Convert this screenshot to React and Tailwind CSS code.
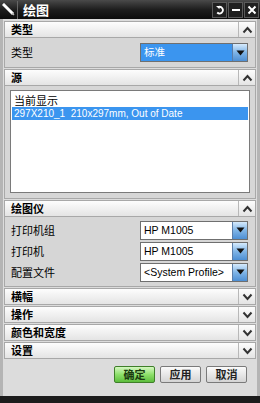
import React from "react";

const F = { fontFamily: '"Noto Sans CJK SC", "Liberation Sans", sans-serif' };
const L = { fontFamily: '"Liberation Sans", "Noto Sans CJK SC", sans-serif' };

function Chevron({ up }) {
  return (
    <svg width="11" height="8" viewBox="0 0 11 8">
      {up ? (
        <path d="M1.5 6.5 L5.5 2 L9.5 6.5" fill="none" stroke="#333" strokeWidth="2" />
      ) : (
        <path d="M1.5 1.5 L5.5 6 L9.5 1.5" fill="none" stroke="#333" strokeWidth="2" />
      )}
    </svg>
  );
}

function Header({ title, up }) {
  return (
    <div className="flex h-[17px] border border-[#a8a8a8] bg-gradient-to-b from-[#fdfdfd] to-[#e4e4e4]">
      <div className="flex-1 flex items-center pl-[6px] text-[11px] font-bold text-black leading-none">{title}</div>
      <div className="w-[17px] flex items-center justify-center border-l border-[#b8b8b8]">
        <Chevron up={up} />
      </div>
    </div>
  );
}

function DropBtn() {
  return (
    <div className="w-[15px] h-full flex items-center justify-center bg-gradient-to-b from-[#d6ebfd] via-[#7fb4e6] to-[#4d8fd4] border-l border-[#5a7da8]">
      <svg width="9" height="6" viewBox="0 0 9 6">
        <path d="M0.5 0.5 H8.5 L4.5 5.5 Z" fill="#111" />
      </svg>
    </div>
  );
}

function Select({ text, active }) {
  return (
    <div className={`flex w-[108px] h-[19px] border border-[#6f6f6f] ${active ? "bg-[#3b95ef]" : "bg-white"}`}>
      <div
        style={L}
        className={`flex-1 flex items-center pl-[3px] text-[10.5px] leading-none ${active ? "text-white" : "text-black"}`}
      >
        {text}
      </div>
      <DropBtn />
    </div>
  );
}

function Row({ label, children }) {
  return (
    <div className="flex items-center justify-between h-[20px]">
      <div className="pl-[6px] text-[11px] text-black leading-none">{label}</div>
      {children}
    </div>
  );
}

function Btn({ label, green }) {
  return (
    <div
      className={`w-[41px] h-[17px] flex items-center justify-center text-[11px] font-bold rounded-[2px] border ${
        green
          ? "border-[#3f7f2a] bg-gradient-to-b from-[#d4f7c0] via-[#8de06a] to-[#5cbd3c] text-[#1a3a10]"
          : "border-[#7a7a7a] bg-gradient-to-b from-[#fbfbfb] to-[#d4d4d4] text-[#222]"
      }`}
    >
      {label}
    </div>
  );
}

export default function App() {
  return (
    <div style={F} className="w-[260px] h-[403px] flex flex-col bg-[#1c1c1c] overflow-hidden">
      {/* title bar */}
      <div className="h-[19px] flex items-center bg-gradient-to-b from-[#4a4a4a] via-[#1e1e1e] to-[#0c0c0c] shrink-0">
        <div className="w-[18px] h-[18px] flex items-center justify-center border-r border-[#666]">
          <svg width="13" height="13" viewBox="0 0 13 13">
            <path d="M2 2 L10 10" stroke="#fff" strokeWidth="3" strokeLinecap="square" />
            <path d="M10 10 L12 12" stroke="#bbb" strokeWidth="1.5" />
          </svg>
        </div>
        <div className="pl-[5px] text-[13px] font-bold text-white leading-none flex-1">绘图</div>
        <div className="flex items-center gap-[1px] pr-[1px]">
          <div className="w-[15px] h-[16px] flex items-center justify-center border border-[#5a5a5a] bg-[#202020]">
            <svg width="10" height="10" viewBox="0 0 10 10">
              <path d="M3 2.2 A3.3 3.3 0 1 1 2.2 7.5" fill="none" stroke="#fff" strokeWidth="1.8" />
              <path d="M1 1 L4.5 1 L4.5 4.2 Z" fill="#fff" />
            </svg>
          </div>
          <div className="w-[15px] h-[16px] flex items-center justify-center border border-[#5a5a5a] bg-[#202020]">
            <div className="w-[8px] h-[2px] bg-white" />
          </div>
          <div className="w-[15px] h-[16px] flex items-center justify-center border border-[#5a5a5a] bg-[#202020]">
            <svg width="10" height="10" viewBox="0 0 10 10">
              <path d="M1.5 1.5 L8.5 8.5 M8.5 1.5 L1.5 8.5" stroke="#fff" strokeWidth="2" />
            </svg>
          </div>
        </div>
      </div>

      {/* body */}
      <div className="flex-1 flex flex-col bg-[#dcdcdc] border-x-[3px] border-[#b4b4b4] px-[1px] pt-[2px]">
        {/* 类型 */}
        <Header title="类型" up />
        <div className="h-[30px] flex items-center justify-between bg-[#d6d6d6] border-x border-b border-[#a8a8a8] pr-[7px] mb-[1px]">
          <div className="pl-[6px] text-[11px] text-black leading-none">类型</div>
          <Select text="标准" active />
        </div>

        {/* 源 */}
        <Header title="源" up />
        <div className="h-[113px] bg-[#d6d6d6] border-x border-b border-[#a8a8a8] px-[5px] pt-[4px] pb-[5px] mb-[1px]">
          <div className="h-full bg-white border border-[#7a7a7a] pt-[2px] px-[1px]">
            <div className="h-[14px] flex items-center pl-[2px] text-[11px] text-black leading-none">当前显示</div>
            <div
              style={L}
              className="h-[13px] flex items-center pl-[2px] bg-[#3b95ef] text-[10px] text-white leading-none whitespace-pre"
            >
              297X210_1  210x297mm, Out of Date
            </div>
          </div>
        </div>

        {/* 绘图仪 */}
        <Header title="绘图仪" up />
        <div className="bg-[#d6d6d6] border-x border-b border-[#a8a8a8] pr-[7px] pt-[3px] pb-[4px] mb-[1px] flex flex-col gap-[1px]">
          <Row label="打印机组"><Select text="HP M1005" /></Row>
          <Row label="打印机"><Select text="HP M1005" /></Row>
          <Row label="配置文件"><Select text="<System Profile>" /></Row>
        </div>

        <div className="flex flex-col gap-[1px]">
          <Header title="横幅" />
          <Header title="操作" />
          <Header title="颜色和宽度" />
          <Header title="设置" />
        </div>

        <div className="flex justify-end gap-[5px] pr-[9px] pt-[7px]">
          <Btn label="确定" green />
          <Btn label="应用" />
          <Btn label="取消" />
        </div>
      </div>
      <div className="h-[7px] shrink-0 bg-[#1c1c1c]" />
    </div>
  );
}
